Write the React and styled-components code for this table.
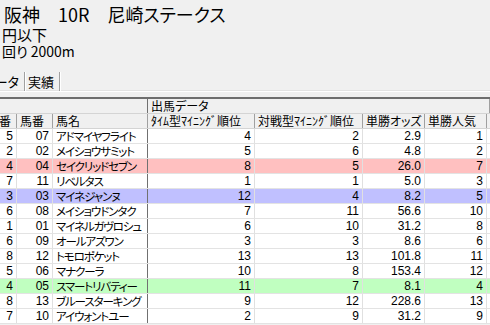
import React from 'react';
import styled, { createGlobalStyle } from 'styled-components';

const GlobalStyle = createGlobalStyle`
  html, body {
    margin: 0;
    padding: 0;
    background: #f0f0f0;
    overflow: hidden;
  }
  body {
    font-family: "Noto Sans CJK JP", sans-serif;
    color: #000;
  }
`;

const Page = styled.div`
  width: 490px;
  height: 325px;
  overflow: hidden;
  background: #f0f0f0;
`;

const Title = styled.div`
  font-size: 18px;
  line-height: 24px;
  padding: 2px 0 0 4px;
  white-space: pre;
  font-feature-settings: "palt";
`;

const SubLine = styled.div`
  font-size: ${props => props.$size}px;
  line-height: 17px;
  padding-left: 2px;
  white-space: pre;
  font-feature-settings: "palt";
`;

const TabStrip = styled.div`
  display: flex;
  height: 19px;
  margin-top: 12px;
  border-bottom: 1px solid #fff;
  box-shadow: inset 0 -3px 0 -2px #e3e3e3;
`;

const Tab = styled.div`
  display: flex;
  align-items: center;
  justify-content: flex-end;
  width: ${props => props.$w}px;
  padding: 0 5px 0 3px;
  box-sizing: border-box;
  font-size: 13px;
  font-feature-settings: "palt";
  white-space: nowrap;
  border-right: 1px solid #a0a0a0;
  box-shadow: 1px 0 0 #fff;
`;

const Grid = styled.div`
  margin-top: 5px;
  margin-left: -16px;
  border-top: 2px solid #6e6e6e;
  width: 506px;
`;

const Row = styled.div`
  display: flex;
  height: 15px;
  box-sizing: border-box;
  border-bottom: 1px solid ${props => (props.$head ? '#d4d4d4' : '#e3e3e3')};
  background: ${props => props.$bg || (props.$head ? '#f0f0f0' : '#fff')};
`;

const Cell = styled.div`
  width: ${props => props.$w}px;
  flex: none;
  box-sizing: border-box;
  padding: 0 3px;
  font-size: ${props => (props.$name ? '11.5px' : '12px')};
  line-height: 14px;
  white-space: nowrap;
  overflow: hidden;
  text-align: ${props => props.$align || 'left'};
  border-right: 1px solid ${props =>
    props.$divider ? '#707070' : props.$head ? '#a0a0a0' : '#e0e0e0'};
  font-family: ${props =>
    props.$num
      ? '"Liberation Sans Narrow", "Liberation Sans", sans-serif'
      : '"Noto Sans CJK JP", sans-serif'};
  font-feature-settings: "palt";
  letter-spacing: ${props => (props.$name ? '-1.1px' : '0')};
`;

const cols = [33, 36, 95, 107, 108, 62, 62, 3];

const tones = {
  pink: '#ffc0c0',
  blue: '#c0c0ff',
  green: '#c0ffc0',
};

const horses = [
  ['5', '07', 'アドマイヤフライト', 4, 2, '2.9', 1],
  ['2', '02', 'メイショウサミット', 5, 6, '4.8', 2],
  ['4', '04', 'セイクリッドセブン', 8, 5, '26.0', 7, 'pink'],
  ['7', '11', 'リベルタス', 1, 1, '5.0', 3],
  ['3', '03', 'マイネジャンヌ', 12, 4, '8.2', 5, 'blue'],
  ['6', '08', 'メイショウドンタク', 7, 11, '56.6', 10],
  ['1', '01', 'マイネルガヴロシュ', 6, 10, '31.2', 8],
  ['6', '09', 'オールアズワン', 3, 3, '8.6', 6],
  ['8', '12', 'トモロポケット', 13, 13, '101.8', 11],
  ['5', '06', 'マナクーラ', 10, 8, '153.4', 12],
  ['4', '05', 'スマートリバティー', 11, 7, '8.1', 4, 'green'],
  ['8', '13', 'ブルースターキング', 9, 12, '228.6', 13],
  ['7', '10', 'アイウォントユー', 2, 9, '31.2', 9],
];

const heads = ['枠番', '馬番', '馬名', 'ﾀｲﾑ型ﾏｲﾆﾝｸﾞ順位', '対戦型ﾏｲﾆﾝｸﾞ順位', '単勝オッズ', '単勝人気', ''];

const App = () => (
  <Page>
    <GlobalStyle />
    <Title>阪神　10R　尼崎ステークス</Title>
    <SubLine $size={15}>円以下</SubLine>
    <SubLine $size={14}>回り 2000m</SubLine>

    <TabStrip>
      <Tab $w={25}>ータ</Tab>
      <Tab $w={35}>実績</Tab>
    </TabStrip>

    <Grid>
      <Row $head>
        <Cell $head $divider $w={cols[0] + cols[1] + cols[2]} />
        <Cell $head $w={342}>出馬データ</Cell>
      </Row>
      <Row $head>
        {heads.map((h, i) => (
          <Cell key={i} $head $w={cols[i]}>
            {h}
          </Cell>
        ))}
      </Row>
      {horses.map(([waku, uma, name, time, taisen, odds, ninki, tone]) => (
        <Row key={uma} $bg={tones[tone]}>
          <Cell $num $align="right" $w={cols[0]}>{waku}</Cell>
          <Cell $num $align="right" $w={cols[1]}>{uma}</Cell>
          <Cell $name $divider $w={cols[2]}>{name}</Cell>
          <Cell $num $align="right" $w={cols[3]}>{time}</Cell>
          <Cell $num $align="right" $w={cols[4]}>{taisen}</Cell>
          <Cell $num $align="right" $w={cols[5]}>{odds}</Cell>
          <Cell $num $align="right" $w={cols[6]}>{ninki}</Cell>
          <Cell $w={cols[7]} />
        </Row>
      ))}
    </Grid>
  </Page>
);

export default App;
